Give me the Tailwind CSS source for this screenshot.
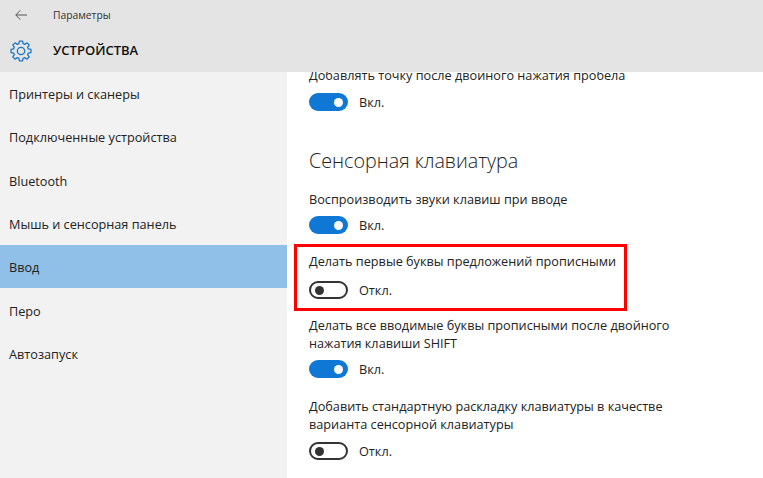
<!DOCTYPE html>
<html>

<head>
  <meta charset="UTF-8" />
  <title>Параметры</title>
  <script src="https://cdn.jsdelivr.net/npm/@tailwindcss/browser@4"></script>
</head>

<body class="w-[763px] h-[478px] overflow-hidden bg-white text-[#222] font-['Open_Sans','Noto_Sans',sans-serif] text-[12.7px]">

  <!-- Header -->
  <header class="h-[72px] bg-[#e4e4e4] flex flex-col">
    <div class="h-[30px] flex items-center">
      <svg class="ml-[15px] w-[12px] h-[10px]" viewBox="0 0 12 10" fill="none" stroke="#555" stroke-width="1">
        <path d="M12 5H.8M5.3 .4L.8 5l4.5 4.6" />
      </svg>
      <span class="ml-[26px] pt-[1px] text-[10.3px] text-[#333]">Параметры</span>
    </div>
    <div class="h-[42px] flex items-center">
      <svg class="ml-[10px] w-[22px] h-[22px]" viewBox="0 0 24 24" fill="none" stroke="#1a76c6" stroke-width="1.4" stroke-linejoin="round">
        <circle cx="12" cy="12" r="4" />
        <path d="M19.98 9.71L22.86 10.28V13.72L19.98 14.29L19.26 16.02L20.9 18.47L18.47 20.9L16.02 19.26L14.29 19.98L13.72 22.86H10.28L9.71 19.98L7.98 19.26L5.53 20.9L3.1 18.47L4.74 16.02L4.02 14.29L1.14 13.72V10.28L4.02 9.71L4.74 7.98L3.1 5.53L5.53 3.1L7.98 4.74L9.71 4.02L10.28 1.14H13.72L14.29 4.02L16.02 4.74L18.47 3.1L20.9 5.53L19.26 7.98Z" />
      </svg>
      <h1 class="ml-[21px] text-[13px] font-semibold text-[#111]">УСТРОЙСТВА</h1>
    </div>
  </header>

  <div class="flex h-[406px]">
    <!-- Sidebar -->
    <nav class="w-[287px] h-full bg-[#f2f2f2] flex flex-col">
      <a class="h-[43.3px] pl-[9px] pt-[2px] flex items-center">Принтеры и сканеры</a>
      <a class="h-[43.3px] pl-[9px] pt-[2px] flex items-center">Подключенные устройства</a>
      <a class="h-[43.3px] pl-[9px] pt-[2px] flex items-center">Bluetooth</a>
      <a class="h-[43.3px] pl-[9px] pt-[2px] flex items-center">Мышь и сенсорная панель</a>
      <a class="h-[43.3px] pl-[9px] pt-[2px] flex items-center bg-[#90c0e7]">Ввод</a>
      <a class="h-[43.3px] pl-[9px] pt-[2px] flex items-center">Перо</a>
      <a class="h-[43.3px] pl-[9px] pt-[2px] flex items-center">Автозапуск</a>
    </nav>

    <!-- Settings pane, scrolled so that the first line is cut by the header -->
    <main class="relative flex-1 h-full overflow-hidden pl-[22px]">
      <div class="-mt-[6px] flex flex-col">
        <p class="leading-[18px]">Добавлять точку после двойного нажатия пробела</p>
        <div class="mt-[9px] flex items-center gap-[11px] h-[18px]">
          <span class="w-[39px] h-[18px] rounded-full bg-[#0f78d4] flex items-center justify-end pr-[5px]"><span class="w-[9px] h-[9px] rounded-full bg-white"></span></span>
          <span class="pt-[2px]">Вкл.</span>
        </div>

        <h2 class="mt-[36px] text-[19.7px] font-light leading-[28px] text-[#222]">Сенсорная клавиатура</h2>

        <p class="mt-[15px] leading-[18px]">Воспроизводить звуки клавиш при вводе</p>
        <div class="mt-[8px] flex items-center gap-[11px] h-[18px]">
          <span class="w-[39px] h-[18px] rounded-full bg-[#0f78d4] flex items-center justify-end pr-[5px]"><span class="w-[9px] h-[9px] rounded-full bg-white"></span></span>
          <span class="pt-[2px]">Вкл.</span>
        </div>

        <p class="mt-[18px] leading-[18px]">Делать первые буквы предложений прописными</p>
        <div class="mt-[11px] flex items-center gap-[11px] h-[18px]">
          <span class="w-[39px] h-[18px] rounded-full border-2 border-[#333] flex items-center pl-[4px]"><span class="w-[9px] h-[9px] rounded-full bg-[#333]"></span></span>
          <span class="pt-[2px]">Откл.</span>
        </div>

        <p class="mt-[17px] leading-[18px]">Делать все вводимые буквы прописными после двойного<br>нажатия клавиши SHIFT</p>
        <div class="mt-[8px] flex items-center gap-[11px] h-[18px]">
          <span class="w-[39px] h-[18px] rounded-full bg-[#0f78d4] flex items-center justify-end pr-[5px]"><span class="w-[9px] h-[9px] rounded-full bg-white"></span></span>
          <span class="pt-[2px]">Вкл.</span>
        </div>

        <p class="mt-[19px] leading-[18px]">Добавить стандартную раскладку клавиатуры в качестве<br>варианта сенсорной клавиатуры</p>
        <div class="mt-[9px] flex items-center gap-[11px] h-[18px]">
          <span class="w-[39px] h-[18px] rounded-full border-2 border-[#333] flex items-center pl-[4px]"><span class="w-[9px] h-[9px] rounded-full bg-[#333]"></span></span>
          <span class="pt-[2px]">Откл.</span>
        </div>
      </div>

      <!-- Red annotation frame -->
      <div class="absolute left-[7px] top-[172px] w-[333px] h-[67px] border-[3px] border-[#ff0000]"></div>
    </main>
  </div>
</body>

</html>
